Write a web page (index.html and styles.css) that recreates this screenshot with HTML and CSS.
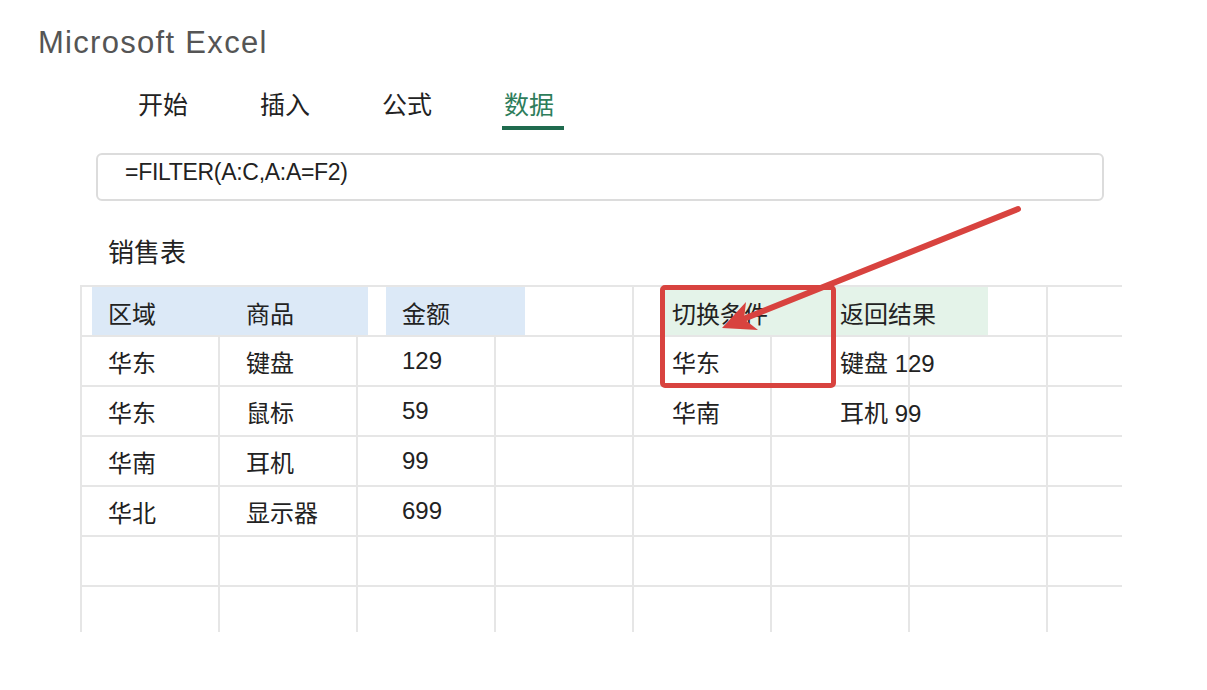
FILE: index.html
```html
<!DOCTYPE html>
<html lang="zh-CN">
<head>
    <meta charset="UTF-8">
    <meta name="viewport" content="width=device-width, initial-scale=1.0">
    <title>Microsoft Excel</title>
    <link rel="stylesheet" href="styles.css">
</head>
<body>
    <div class="app">
        <header class="header">
            <h1 class="header__title">Microsoft Excel</h1>
        </header>
        <nav class="tabs">
            <span class="tabs__item">开始</span>
            <span class="tabs__item">插入</span>
            <span class="tabs__item">公式</span>
            <span class="tabs__item tabs__item_active">数据</span>
        </nav>
        <div class="formula">=FILTER(A:C,A:A=F2)</div>
        <h2 class="sheet__title">销售表</h2>
        <div class="sheet">
            <!-- header row: grid cells, fills, labels -->
            <div class="cell head head_1"></div>
            <div class="cell head head_2"></div>
            <div class="cell head head_3"></div>
            <div class="cell head head_4"></div>
            <div class="cell head head_5"></div>
            <div class="cell head head_6"></div>
            <div class="cell head head_7"></div>
            <div class="cell head head_8"></div>
            <div class="fill fill_blue fill_a"></div>
            <div class="fill fill_blue fill_b"></div>
            <div class="fill fill_green fill_c"></div>
            <div class="label head_1">区域</div>
            <div class="label head_2">商品</div>
            <div class="label cell_amount head_3">金额</div>
            <div class="label cell_cond head_5">切换条件</div>
            <div class="label cell_result head_6">返回结果</div>

            <div class="cell">华东</div><div class="cell">键盘</div><div class="cell cell_amount">129</div><div class="cell"></div>
            <div class="cell cell_cond">华东</div><div class="cell cell_result">键盘 129</div><div class="cell"></div><div class="cell"></div>

            <div class="cell">华东</div><div class="cell">鼠标</div><div class="cell cell_amount">59</div><div class="cell"></div>
            <div class="cell cell_cond">华南</div><div class="cell cell_result">耳机 99</div><div class="cell"></div><div class="cell"></div>

            <div class="cell">华南</div><div class="cell">耳机</div><div class="cell cell_amount">99</div><div class="cell"></div>
            <div class="cell"></div><div class="cell"></div><div class="cell"></div><div class="cell"></div>

            <div class="cell">华北</div><div class="cell">显示器</div><div class="cell cell_amount">699</div><div class="cell"></div>
            <div class="cell"></div><div class="cell"></div><div class="cell"></div><div class="cell"></div>

            <div class="cell"></div><div class="cell"></div><div class="cell"></div><div class="cell"></div>
            <div class="cell"></div><div class="cell"></div><div class="cell"></div><div class="cell"></div>

            <div class="cell"></div><div class="cell"></div><div class="cell"></div><div class="cell"></div>
            <div class="cell"></div><div class="cell"></div><div class="cell"></div><div class="cell"></div>
        </div>

        <!-- annotation -->
        <div class="mark"></div>
        <svg class="arrow" width="1207" height="690" viewBox="0 0 1207 690">
            <line x1="1018" y1="209" x2="746" y2="318" stroke="#d8433f" stroke-width="6" stroke-linecap="round"/>
            <polygon points="722,328 746,302 744,319 758,330" fill="#d8433f"/>
        </svg>
    </div>
</body>
</html>
```

FILE: styles.css
```css
body {
    margin: 0;
    background: #ffffff;
    font-family: "Liberation Sans", "Noto Sans CJK SC", sans-serif;
    color: #222222;
}

.app {
    position: relative;
    width: 1207px;
    height: 690px;
    overflow: hidden;
}

.header {
    padding: 25px 0 0 38px;
}

.header__title {
    margin: 0;
    font-size: 31px;
    line-height: 36px;
    font-weight: 400;
    letter-spacing: 1.3px;
    color: #555555;
}

.tabs {
    display: flex;
    margin-top: 27px;
    padding-left: 138px;
}

.tabs__item {
    position: relative;
    margin-right: 72px;
    padding-bottom: 12px;
    font-family: "Noto Sans CJK SC", sans-serif;
    font-size: 25px;
    line-height: 30px;
    color: #222222;
}

.tabs__item_active {
    color: #2e7d5b;
}

.tabs__item_active::after {
    content: "";
    position: absolute;
    left: -2px;
    bottom: 0;
    width: 62px;
    height: 4px;
    background: #1f6b4e;
}

.formula {
    box-sizing: border-box;
    width: 1008px;
    height: 48px;
    margin: 23px 0 0 96px;
    padding: 3px 0 0 27px;
    border: 2px solid #dcdcdc;
    border-radius: 6px;
    font-size: 23px;
    line-height: 28px;
    letter-spacing: -0.3px;
    color: #222222;
}

.sheet__title {
    margin: 34px 0 0 108px;
    font-family: "Noto Sans CJK SC", sans-serif;
    font-size: 26px;
    line-height: 32px;
    font-weight: 400;
    color: #222222;
}

.sheet {
    display: grid;
    grid-template-columns: repeat(8, 138px);
    grid-auto-rows: 50px;
    width: 1042px;
    height: 347px;
    margin: 18px 0 0 80px;
    box-sizing: border-box;
    border-top: 2px solid #e6e6e6;
    border-left: 2px solid #e6e6e6;
    overflow: hidden;
}

.cell {
    box-sizing: border-box;
    display: flex;
    align-items: center;
    padding-left: 26px;
    border-right: 2px solid #e6e6e6;
    border-bottom: 2px solid #e6e6e6;
    font-size: 24px;
    white-space: nowrap;
    color: #222222;
}

.head {
    grid-row: 1;
}

.head_1 { grid-column: 1; }
.head_2 { grid-column: 2; }
.head_3 { grid-column: 3; }
.head_4 { grid-column: 4; }
.head_5 { grid-column: 5; }
.head_6 { grid-column: 6; }
.head_7 { grid-column: 7; }
.head_8 { grid-column: 8; }

.fill {
    grid-row: 1;
    position: relative;
    z-index: 1;
    margin-bottom: 2px;
}

.fill_blue {
    background: #dce9f7;
}

.fill_green {
    background: #e4f3e9;
}

.fill_a {
    grid-column: 1 / 3;
    margin-left: 10px;
    margin-right: -10px;
}

.fill_b {
    grid-column: 3;
    margin-left: 28px;
    margin-right: -29px;
}

.fill_c {
    grid-column: 5 / 7;
    margin-left: 26px;
    margin-right: -78px;
}

.label {
    grid-row: 1;
    position: relative;
    z-index: 2;
    display: flex;
    align-items: center;
    padding-left: 26px;
    font-size: 24px;
    white-space: nowrap;
    color: #222222;
}

.cell_amount {
    padding-left: 44px;
}

.cell_cond {
    padding-left: 38px;
}

.cell_result {
    padding-left: 68px;
}

.mark {
    position: absolute;
    left: 660px;
    top: 285px;
    width: 176px;
    height: 103px;
    box-sizing: border-box;
    border: 5px solid #d8433f;
    border-radius: 5px;
    z-index: 3;
}

.arrow {
    position: absolute;
    left: 0;
    top: 0;
    z-index: 4;
    pointer-events: none;
}
```
